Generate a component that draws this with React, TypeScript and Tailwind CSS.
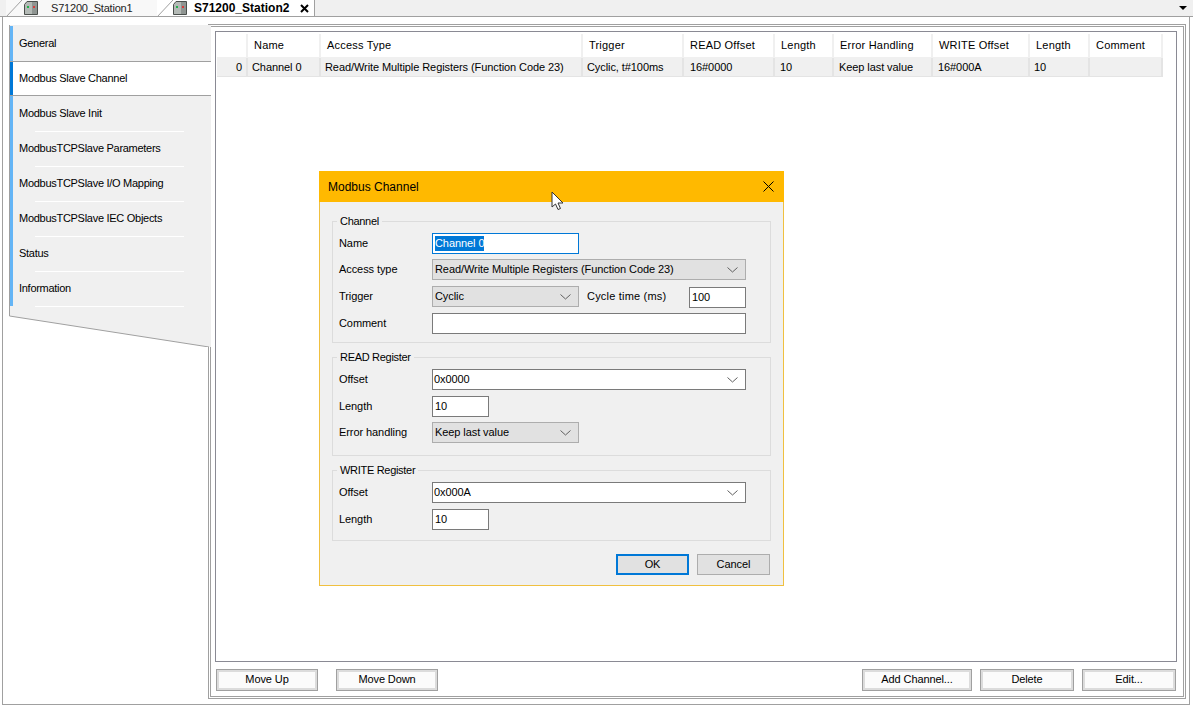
const font = "font-['Liberation_Sans',sans-serif]";

const columns = [
  { name: "", width: "w-[31px]", value: "0", cell: "pr-[4px] justify-end" },
  { name: "Name", width: "w-[73px]", value: "Channel 0", cell: "pl-[4px]" },
  { name: "Access Type", width: "w-[262px]", value: "Read/Write Multiple Registers (Function Code 23)", cell: "pl-[4px]" },
  { name: "Trigger", width: "w-[101px]", value: "Cyclic, t#100ms", cell: "pl-[4px]" },
  { name: "READ Offset", width: "w-[91px]", value: "16#0000", cell: "pl-[6px]" },
  { name: "Length", width: "w-[59px]", value: "10", cell: "pl-[5px]" },
  { name: "Error Handling", width: "w-[99px]", value: "Keep last value", cell: "pl-[5px]" },
  { name: "WRITE Offset", width: "w-[97px]", value: "16#000A", cell: "pl-[5px]" },
  { name: "Length", width: "w-[60px]", value: "10", cell: "pl-[4px]" },
  { name: "Comment", width: "w-[73px]", value: "", cell: "pl-[4px]" },
];

const navItems = [
  "General",
  "Modbus Slave Channel",
  "Modbus Slave Init",
  "ModbusTCPSlave Parameters",
  "ModbusTCPSlave I/O Mapping",
  "ModbusTCPSlave IEC Objects",
  "Status",
  "Information",
];

const StationIcon = () => (
  <svg width="14" height="14" viewBox="0 0 14 14" className="shrink-0">
    <path d="M0.5 3.5 L3 0.5 L13.5 0.5 L13.5 13.5 L0.5 13.5 Z" fill="#b4bab6" stroke="#4a4f4c" />
    <rect x="8" y="1" width="5" height="12" fill="#8f9592" />
    <rect x="3" y="5" width="2" height="2" fill="#22b14c" />
    <rect x="9" y="5" width="2" height="2" fill="#d83b3b" />
  </svg>
);

const Chevron = () => (
  <svg width="11" height="6" viewBox="0 0 11 6" className="shrink-0">
    <path d="M0.5 0.5 L5.5 5 L10.5 0.5" fill="none" stroke="#606060" strokeWidth="1" />
  </svg>
);

const Select = ({ value, width }: { value: string; width: string }) => (
  <div className={`${width} h-[21px] flex items-center justify-between pl-[2px] pr-[7px] bg-[#e1e1e1] border border-[#adadad] text-black`}>
    <span>{value}</span>
    <Chevron />
  </div>
);

const Combo = ({ value }: { value: string }) => (
  <div className="w-[314px] h-[21px] flex items-center justify-between pl-[1px] pr-[7px] bg-white border border-[#7a7a7a]">
    <span>{value}</span>
    <Chevron />
  </div>
);

const Input = ({ value, width }: { value?: string; width: string }) => (
  <div className={`${width} h-[21px] flex items-center pl-[2px] bg-white border border-[#7a7a7a]`}>{value}</div>
);

const Row = ({ label, children }: { label: string; children: React.ReactNode }) => (
  <div className="flex items-center">
    <div className="w-[93px] shrink-0">{label}</div>
    {children}
  </div>
);

const Group = ({ title, height, gap, children }: { title: string; height: string; gap: string; children: React.ReactNode }) => (
  <div className={`relative ${height} border border-[#dcdcdc] pl-[6px] pt-[11px]`}>
    <span className="absolute left-[4px] top-[-8px] bg-[#f0f0f0] px-[3px] leading-[14px] tracking-[-0.3px]">{title}</span>
    <div className={`flex flex-col ${gap}`}>{children}</div>
  </div>
);

const FooterButton = ({ label, width }: { label: string; width: string }) => (
  <button className={`${width} h-[22px] pb-[2px] bg-[#fbfbfb] border border-[#a0a0a0] outline-2 outline-offset-[-3px] outline-[#dcdcdc] text-black tracking-[-0.1px]`}>
    {label}
  </button>
);

const Cursor = () => (
  <svg width="14" height="20" viewBox="0 0 14 20" className="absolute left-[232px] top-[20px]">
    <path d="M1 1 L1 16 L4.5 13 L7 18.5 L9.5 17.5 L7 12 L12 12 Z" fill="#ffffff" stroke="#333333" strokeWidth="1" />
  </svg>
);

function Dialog() {
  return (
    <div className="absolute left-[319px] top-[171px] w-[465px] h-[415px] flex flex-col bg-[#f0f0f0] border border-[#f0c040] border-t-0 tracking-[-0.08px]">
      <div className="relative h-[31px] shrink-0 flex items-center justify-between mx-[-1px] pl-[9px] pr-[10px] bg-[#ffb900] text-[12px] tracking-normal">
        <span>Modbus Channel</span>
        <svg width="11" height="11" viewBox="0 0 11 11">
          <path d="M0.5 0.5 L10.5 10.5 M10.5 0.5 L0.5 10.5" stroke="#000" strokeWidth="1" />
        </svg>
        <Cursor />
      </div>
      <div className="flex flex-col px-[12px] pt-[19px] gap-[14px]">
        <Group title="Channel" height="h-[122px]" gap="gap-[5px]">
          <Row label="Name">
            <div className="w-[147px] h-[21px] flex items-center pl-[2px] bg-white border border-[#0078d7]">
              <span className="bg-[#0078d7] text-white leading-[15px]">Channel 0</span>
            </div>
          </Row>
          <Row label="Access type">
            <Select value="Read/Write Multiple Registers (Function Code 23)" width="w-[314px]" />
          </Row>
          <div className="flex items-start mt-[1px]">
            <div className="w-[93px] h-[21px] flex items-center shrink-0">Trigger</div>
            <Select value="Cyclic" width="w-[147px]" />
            <div className="w-[110px] h-[21px] flex items-center pl-[8px] tracking-[0.2px]">Cycle time (ms)</div>
            <div className="mt-[1px]">
              <Input value="100" width="w-[57px]" />
            </div>
          </div>
          <Row label="Comment">
            <Input width="w-[314px]" />
          </Row>
        </Group>
        <Group title="READ Register" height="h-[99px]" gap="gap-[6px]">
          <Row label="Offset">
            <Combo value="0x0000" />
          </Row>
          <Row label="Length">
            <Input value="10" width="w-[57px]" />
          </Row>
          <div className="mt-[-1px]">
            <Row label="Error handling">
              <Select value="Keep last value" width="w-[147px]" />
            </Row>
          </div>
        </Group>
        <Group title="WRITE Register" height="h-[71px]" gap="gap-[6px]">
          <Row label="Offset">
            <Combo value="0x000A" />
          </Row>
          <Row label="Length">
            <Input value="10" width="w-[57px]" />
          </Row>
        </Group>
      </div>
      <div className="flex justify-end gap-[8px] pr-[13px] mt-[13px]">
        <button className="w-[73px] h-[21px] bg-[#e1e1e1] border-2 border-[#0078d7]">OK</button>
        <button className="w-[73px] h-[21px] bg-[#e1e1e1] border border-[#adadad]">Cancel</button>
      </div>
    </div>
  );
}

export default function App() {
  return (
    <div className={`relative w-[1193px] h-[706px] overflow-hidden bg-white text-[11px] text-black ${font}`}>
      {/* Tab strip */}
      <div className="h-[17px] flex items-stretch bg-[#f0f0f0] border-b border-[#a0a0a0] pl-[6px]">
        <div className="relative w-[151px] flex items-center bg-[#f8f8f8]">
          <svg width="16" height="17" viewBox="0 0 16 17" className="shrink-0">
            <path d="M0 17 L16 0" stroke="#a0a0a0" fill="none" />
          </svg>
          <span className="ml-[2px]"><StationIcon /></span>
          <span className="ml-[13px] text-[#222] tracking-[-0.2px]">S71200_Station1</span>
        </div>
        <div className="flex items-center bg-white w-[158px] border-r border-[#a0a0a0]">
          <svg width="16" height="17" viewBox="0 0 16 17" className="shrink-0">
            <path d="M0 17 L16 0" stroke="#a0a0a0" fill="none" />
          </svg>
          <StationIcon />
          <span className="ml-[7px] font-bold text-[12px]">S71200_Station2</span>
          <svg width="9" height="9" viewBox="0 0 9 9" className="ml-auto mr-[5px]">
            <path d="M1 1 L8 8 M8 1 L1 8" stroke="#000" strokeWidth="2" />
          </svg>
        </div>
        <div className="ml-auto mr-[6px] self-center w-0 h-0 border-x-[4px] border-x-transparent border-t-[4px] border-t-black" />
      </div>

      {/* Main frame */}
      <div className="h-[688px] ml-[2px] mr-[3px] border-x border-b border-[#a0a0a0] flex items-start">
        {/* Left navigation */}
        <div className="relative z-10 w-[202px] -mr-[3px] shrink-0 ml-[6px] mt-[8px]">
          <div className="flex flex-col bg-[#f0f0f0] border-l border-[#a0a0a0] pt-px tracking-[-0.28px]">
            {navItems.map((item, i) => (
              <div
                key={item}
                className={`relative h-[35px] flex items-center pl-[9px] ${
                  i === 1 ? "bg-white border-y border-[#a0a0a0]" : ""
                }`}
              >
                <div className={`absolute left-0 inset-y-0 w-[3px] ${i === 1 ? "bg-[#0078d7]" : "bg-[#64b5f6]"}`} />
                {item}
                {i > 1 && <div className="absolute left-[25px] bottom-[-1px] w-[149px] h-px bg-white" />}
              </div>
            ))}
          </div>
          <svg width="202" height="41" viewBox="0 0 202 41" className="block">
            <path d="M0 0 L202 0 L202 41 L200 41 L0 10 Z" fill="#f0f0f0" />
            <path d="M0.5 0 L0.5 10 L200 41" fill="none" stroke="#a0a0a0" />
          </svg>
        </div>

        {/* Right panel: double frame around the table and the button row */}
        <div className="w-[978px] h-[675px] mt-[7px] p-px border border-[#a0a0a0]">
          <div className="h-full flex flex-col border border-[#a0a0a0] pl-[4px] pr-[6px] pt-[4px]">
            <div className="h-[631px] shrink-0 border border-[#8a8a94] pl-px pt-px">
              <div className="flex h-[24px] pt-px">
                {columns.map((c, i) => (
                  <div key={i} className={`${c.width} shrink-0 flex items-center pl-[6px] border-r-2 border-[#f0f0f0] tracking-[0.2px]`}>
                    {c.name}
                  </div>
                ))}
              </div>
              <div className="flex h-[20px] pt-px bg-[#f0f0f0] border-b border-[#e4e4e4] w-fit tracking-[-0.08px]">
                {columns.map((c, i) => (
                  <div key={i} className={`${c.width} ${c.cell} shrink-0 flex items-center border-r-2 border-[#e4e4e4] whitespace-nowrap`}>
                    {c.value}
                  </div>
                ))}
              </div>
            </div>
            <div className="flex justify-between pt-[7px] pl-px pr-px">
              <div className="flex gap-[18px]">
                <FooterButton label="Move Up" width="w-[102px]" />
                <FooterButton label="Move Down" width="w-[102px]" />
              </div>
              <div className="flex gap-[8px]">
                <FooterButton label="Add Channel..." width="w-[110px]" />
                <FooterButton label="Delete" width="w-[94px]" />
                <FooterButton label="Edit..." width="w-[94px]" />
              </div>
            </div>
          </div>
        </div>
      </div>

      <Dialog />
    </div>
  );
}
